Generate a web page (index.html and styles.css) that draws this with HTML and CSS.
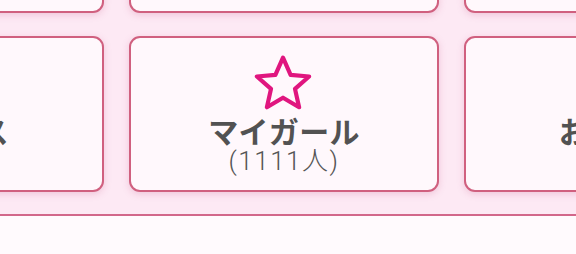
FILE: index.html
```html
<!DOCTYPE html>
<html lang="ja">
<head>
<meta charset="utf-8">
<link rel="stylesheet" href="styles.css">
</head>
<body>
<section class="menu">
  <div class="grid">
    <div class="card"></div>
    <div class="card"></div>
    <div class="card"></div>
    <div class="card">
      <svg class="star" width="60" height="56" viewBox="0 0 60 56" aria-hidden="true">
        <polygon points="30,2.6 37.6,19.8 56.1,21.5 42,33.9 46.1,52.2 30,42.7 13.9,52.2 18,33.9 3.9,21.5 22.4,19.8" fill="none" stroke="#e0167f" stroke-width="4.2" stroke-linejoin="round"/>
      </svg>
      <div class="label">ニュース</div>
      <div class="count">(12件)</div>
    </div>
    <div class="card">
      <svg class="star" width="60" height="56" viewBox="0 0 60 56" aria-hidden="true">
        <polygon points="30,2.6 37.6,19.8 56.1,21.5 42,33.9 46.1,52.2 30,42.7 13.9,52.2 18,33.9 3.9,21.5 22.4,19.8" fill="none" stroke="#e0167f" stroke-width="4.2" stroke-linejoin="round"/>
      </svg>
      <div class="label">マイガール</div>
      <div class="count">(1111人)</div>
    </div>
    <div class="card">
      <svg class="star" width="60" height="56" viewBox="0 0 60 56" aria-hidden="true">
        <polygon points="30,2.6 37.6,19.8 56.1,21.5 42,33.9 46.1,52.2 30,42.7 13.9,52.2 18,33.9 3.9,21.5 22.4,19.8" fill="none" stroke="#e0167f" stroke-width="4.2" stroke-linejoin="round"/>
      </svg>
      <div class="label">お知らせ</div>
      <div class="count">(3件)</div>
    </div>
  </div>
</section>
<div class="below"></div>
</body>
</html>
```
FILE: styles.css
```css
html, body {
  margin: 0;
  padding: 0;
  width: 576px;
  height: 254px;
  overflow: hidden;
  background: #fffafd;
  font-family: "Noto Sans CJK JP", "Noto Sans", sans-serif;
}
.menu {
  background: #fde9f4;
  border-bottom: 2px solid #d2678a;
  padding-bottom: 22px;
  margin-top: -143px;
  overflow: hidden;
}
.grid {
  display: grid;
  grid-template-columns: 310px 310px 310px;
  grid-auto-rows: 156px;
  column-gap: 25px;
  row-gap: 23px;
  margin-left: -206px;
  width: 980px;
}
.card {
  box-sizing: border-box;
  background: #fff8fc;
  border: 2px solid #d0607f;
  border-radius: 11px;
  box-shadow: 0 2px 7px rgba(200, 90, 140, 0.25);
  display: flex;
  flex-direction: column;
  align-items: center;
  padding-top: 17px;
  overflow: hidden;
}
.star {
  display: block;
  margin-left: -2px;
}
.label {
  font-weight: 700;
  font-size: 30px;
  line-height: 32px;
  color: #525252;
  margin-top: 3px;
  letter-spacing: 0.3px;
}
.count {
  font-family: Roboto, "Noto Sans CJK JP", sans-serif;
  font-weight: 300;
  font-size: 26px;
  line-height: 28px;
  letter-spacing: 1.5px;
  color: #555555;
  margin-top: 1px;
}
.below {
  height: 40px;
}
```
